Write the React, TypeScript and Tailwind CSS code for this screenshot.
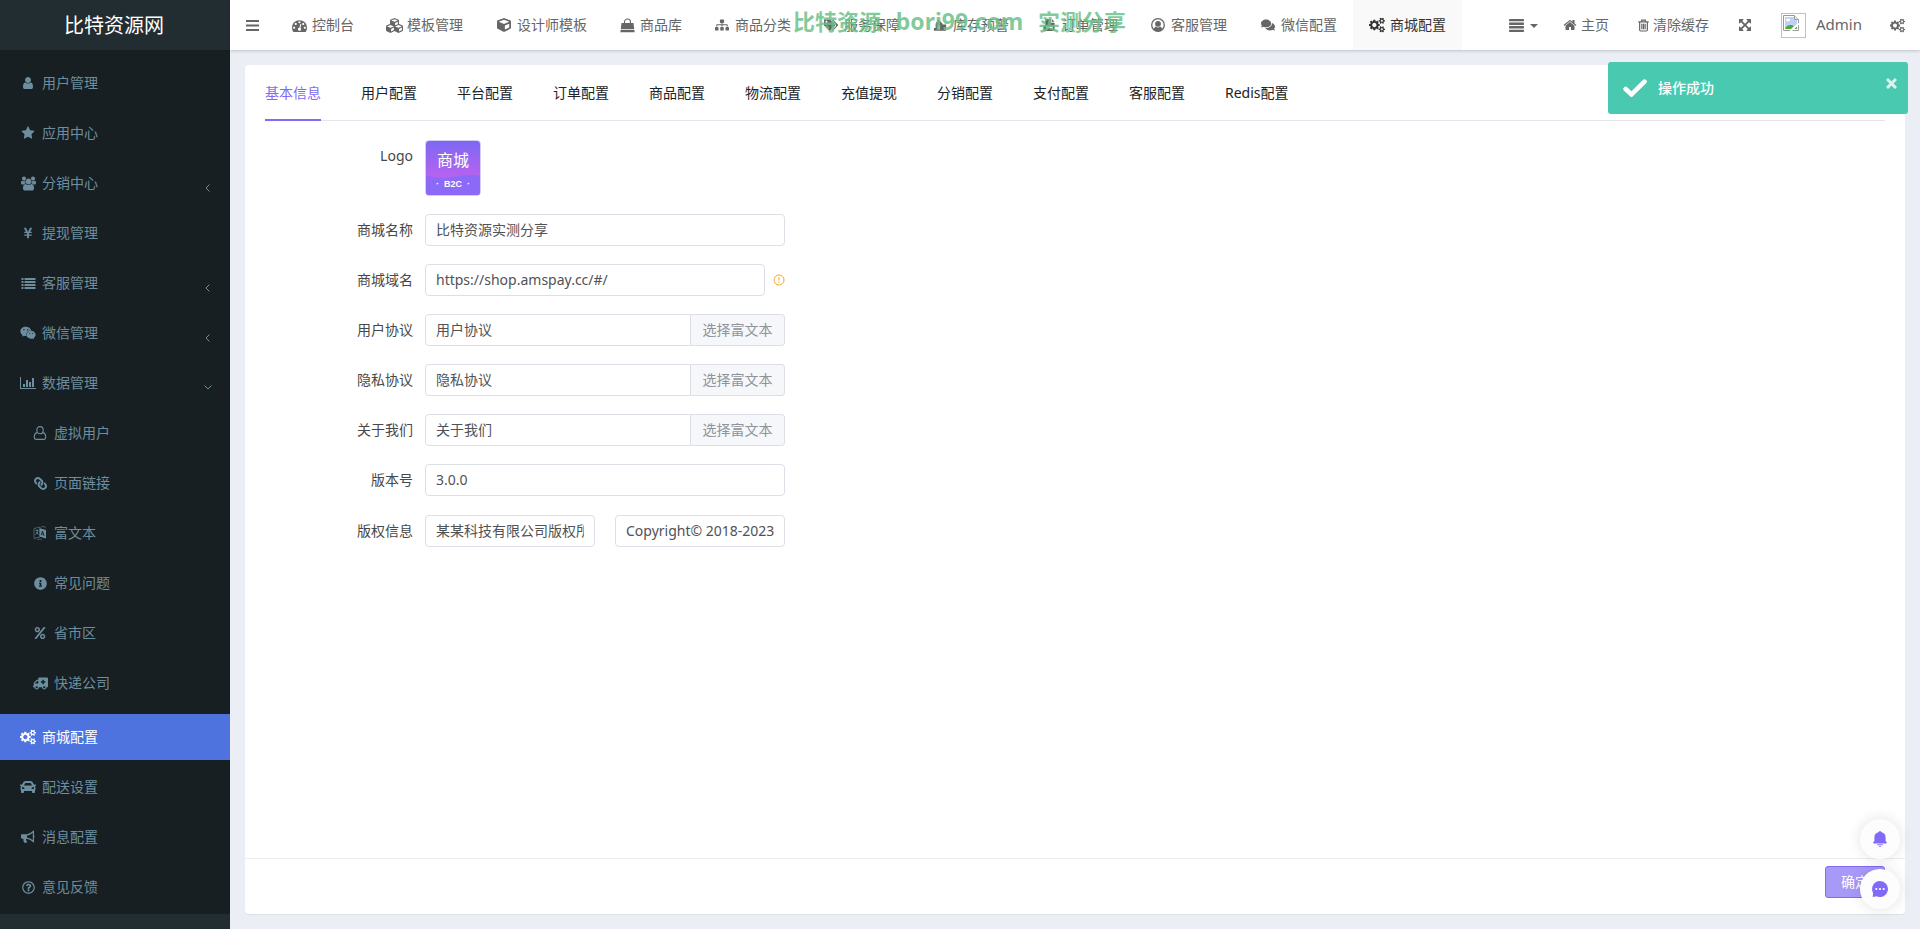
import React from 'react';
import {
  FaAmbulance,
  FaCar,
  FaComments,
  FaCube,
  FaCubes,
  FaInfoCircle,
  FaLink,
  FaPercent,
  FaRegQuestionCircle,
  FaSitemap,
  FaTags,
  FaWeixin,
  FaYenSign,
} from 'react-icons/fa';
import { clsx } from 'clsx';

interface IconProps {
  className?: string;
}

type IconType = React.ComponentType<IconProps>;

const glyph = (d: string, viewBox = '0 0 1792 1792'): IconType =>
  function Glyph({ className }) {
    return (
      <svg className={className} viewBox={viewBox} fill="currentColor">
        <path d={d} />
      </svg>
    );
  };

const IconUser = glyph(
  'M1536 1399q0 109-62.5 187t-150.5 78h-854q-88 0-150.5-78t-62.5-187q0-85 8.5-160.5t31.5-152 58.5-131 94-89 134.5-34.5q131 128 313 128t313-128q76 0 134.5 34.5t94 89 58.5 131 31.5 152 8.5 160.5zm-256-887q0 159-112.5 271.5t-271.5 112.5-271.5-112.5-112.5-271.5 112.5-271.5 271.5-112.5 271.5 112.5 112.5 271.5z'
);
const IconUsers = glyph(
  'M593 896q-162 5-265 128h-134q-82 0-138-40.5t-56-118.5q0-353 124-353 6 0 43.5 21t97.5 42.5 119 21.5q67 0 133-23-5 37-5 66 0 139 81 256zm1071 637q0 120-73 189.5t-194 69.5h-874q-121 0-194-69.5t-73-189.5q0-53 3.5-103.5t14-109 26.5-108.5 43-97.5 62-81 85.5-53.5 111.5-20q10 0 43 21.5t73 48 107 48 135 21.5 135-21.5 107-48 73-48 43-21.5q61 0 111.5 20t85.5 53.5 62 81 43 97.5 26.5 108.5 14 109 3.5 103.5zm-1024-1277q0 106-75 181t-181 75-181-75-75-181 75-181 181-75 181 75 75 181zm704 384q0 159-112.5 271.5t-271.5 112.5-271.5-112.5-112.5-271.5 112.5-271.5 271.5-112.5 271.5 112.5 112.5 271.5zm576 225q0 78-56 118.5t-138 40.5h-134q-103-123-265-128 81-117 81-256 0-29-5-66 66 23 133 23 59 0 119-21.5t97.5-42.5 43.5-21q124 0 124 353zm-128-609q0 106-75 181t-181 75-181-75-75-181 75-181 181-75 181 75 75 181z',
  '0 0 1920 1792'
);
const IconStar = glyph(
  'M1728 647q0 22-26 48l-363 354 86 500q1 7 1 20 0 21-10.5 35.5t-30.5 14.5q-19 0-40-12l-449-236-449 236q-22 12-40 12-21 0-31.5-14.5t-10.5-35.5q0-6 2-20l86-500-364-354q-25-27-25-48 0-37 56-46l502-73 225-455q19-41 49-41t49 41l225 455 502 73q56 9 56 46z'
);
const IconHome = glyph(
  'M1472 992v480q0 26-19 45t-45 19h-384v-384h-256v384h-384q-26 0-45-19t-19-45v-480q0-1 .5-3t.5-3l575-474 575 474q1 2 1 6zm223-69l-62 74q-8 9-21 11h-3q-13 0-21-7l-692-577-692 577q-12 8-24 7-13-2-21-11l-62-74q-8-10-7-23.5t11-21.5l719-599q32-26 76-26t76 26l244 204v-195q0-14 9-23t23-9h192q14 0 23 9t9 23v408l219 182q10 8 11 21.5t-7 23.5z'
);
const IconDashboard = glyph(
  'M384 1152q0-53-37.5-90.5t-90.5-37.5-90.5 37.5-37.5 90.5 37.5 90.5 90.5 37.5 90.5-37.5 37.5-90.5zm192-448q0-53-37.5-90.5t-90.5-37.5-90.5 37.5-37.5 90.5 37.5 90.5 90.5 37.5 90.5-37.5 37.5-90.5zm428 481l101-382q6-26-7.5-48.5t-38.5-29.5-48 6.5-30 39.5l-101 382q-60 5-107 43.5t-63 98.5q-20 77 20 146t117 89 146-20 89-117q16-60-6-117t-72-91zm660-33q0-53-37.5-90.5t-90.5-37.5-90.5 37.5-37.5 90.5 37.5 90.5 90.5 37.5 90.5-37.5 37.5-90.5zm-640-640q0-53-37.5-90.5t-90.5-37.5-90.5 37.5-37.5 90.5 37.5 90.5 90.5 37.5 90.5-37.5 37.5-90.5zm448 192q0-53-37.5-90.5t-90.5-37.5-90.5 37.5-37.5 90.5 37.5 90.5 90.5 37.5 90.5-37.5 37.5-90.5zm320 448q0 261-141 483-19 29-54 29h-1402q-35 0-54-29-141-221-141-483 0-182 71-348t191-286 286-191 348-71 348 71 286 191 191 286 71 348z'
);
const IconCogs = glyph(
  'M896 896q0-106-75-181t-181-75-181 75-75 181 75 181 181 75 181-75 75-181zm768 512q0-52-38-90t-90-38-90 38-38 90q0 53 37.5 90.5t90.5 37.5 90.5-37.5 37.5-90.5zm0-1024q0-52-38-90t-90-38-90 38-38 90q0 53 37.5 90.5t90.5 37.5 90.5-37.5 37.5-90.5zm-384 421v185q0 10-7 19.5t-16 10.5l-155 24q-11 35-32 76 34 48 90 115 7 11 7 20 0 12-7 19-23 30-82.5 89.5t-78.5 59.5q-11 0-21-7l-115-90q-37 19-77 31-11 108-23 155-7 24-30 24h-186q-11 0-20-7.5t-10-17.5l-23-153q-34-10-75-31l-118 89q-7 7-20 7-11 0-21-8-144-133-144-160 0-9 7-19 10-14 41-53t47-61q-23-44-35-82l-152-24q-10-1-17-9.5t-7-19.5v-185q0-10 7-19.5t16-10.5l155-24q11-35 32-76-34-48-90-115-7-11-7-20 0-12 7-20 22-30 82-89t79-59q11 0 21 7l115 90q34-18 77-32 11-108 23-154 7-24 30-24h186q11 0 20 7.5t10 17.5l23 153q34 10 75 31l118-89q8-7 20-7 11 0 21 8 144 133 144 160 0 8-7 19-12 16-42 54t-45 60q23 48 34 82l152 23q10 2 17 10.5t7 19.5zm640 533v140q0 16-149 31-12 27-30 52 51 113 51 138 0 4-4 7-122 71-124 71-8 0-46-47t-52-68q-20 2-30 2t-30-2q-14 21-52 68t-46 47q-2 0-124-71-4-3-4-7 0-25 51-138-18-25-30-52-149-15-149-31v-140q0-16 149-31 13-29 30-52-51-113-51-138 0-4 4-7 4-2 35-20t59-34 30-16q8 0 46 46.5t52 67.5q20-2 30-2t30 2q51-71 92-112l6-2q4 0 124 70 4 3 4 7 0 25-51 138 17 23 30 52 149 15 149 31zm0-1024v140q0 16-149 31-12 27-30 52 51 113 51 138 0 4-4 7-122 71-124 71-8 0-46-47t-52-68q-20 2-30 2t-30-2q-14 21-52 68t-46 47q-2 0-124-71-4-3-4-7 0-25 51-138-18-25-30-52-149-15-149-31v-140q0-16 149-31 13-29 30-52-51-113-51-138 0-4 4-7 4-2 35-20t59-34 30-16q8 0 46 46.5t52 67.5q20-2 30-2t30 2q51-71 92-112l6-2q4 0 124 70 4 3 4 7 0 25-51 138 17 23 30 52 149 15 149 31z',
  '0 0 1920 1792'
);
const IconExpand = glyph(
  'M1411 541l-355 355 355 355 144-144q29-31 70-14 39 17 39 59v448q0 26-19 45t-45 19h-448q-42 0-59-40-17-39 14-69l144-144-355-355-355 355 144 144q31 30 14 69-17 40-59 40h-448q-26 0-45-19t-19-45v-448q0-42 40-59 39-17 69 14l144 144 355-355-355-355-144 144q-19 19-45 19-12 0-24-5-40-17-40-59v-448q0-26 19-45t45-19h448q42 0 59 40 17 39-14 69l-144 144 355 355 355-355-144-144q-31-30-14-69 17-40 59-40h448q26 0 45 19t19 45v448q0 42-39 59-13 5-25 5-26 0-45-19z'
);
const IconList = glyph('M0 2h2v2H0zM3 2h11v2H3zM0 5h2v2H0zM3 5h11v2H3zM0 8h2v2H0zM3 8h11v2H3zM0 11h2v2H0zM3 11h11v2H3z', '0 0 14 15');
const IconChart = glyph('M0 1h1v11h15v1H0zM3 8h2v3H3zM6 4h2v7H6zM9 6h2v5H9zM12 2h2v9h-2z', '0 0 16 14');
const IconBars = glyph('M0 1h13v2H0zM0 5.5h13v2H0zM0 10h13v2H0z', '0 0 13 13');
const IconJustify = glyph('M0 0h15v2.4H0zM0 3.6h15V6H0zM0 7.2h15v2.4H0zM0 10.8h15v2.4H0z', '0 0 15 13.2');
const IconCaret = glyph('M0 0h8L4 4z', '0 0 8 4');
const IconStock = glyph('M6 1l5 5v1h4v7H1v-3h2V6zM6 8v4h2V8z', '0 0 16 15');
const IconOrder = glyph('M3 1h6v4h4v9H1V8h2zM10 1l3 3h-3zM4 9v2h7V9z', '0 0 14 15');
const IconBell = glyph(
  'M8 0c.6 0 1 .4 1.100.9C11.800 1.400 13.600 3.500 13.600 6v4l1.100 1.200c.3.400.1 1.200-.6 1.200H1.900c-.7 0-.9-.8-.6-1.200L2.400 10V6c0-2.500 1.800-4.600 4.500-5.100C7 .4 7.400 0 8 0zM5.300 13.300h5.400v.9H5.300zM6.300 14.900h3.400L8 16z',
  '0 0 16 16'
);

const IconChat: IconType = ({ className }) => (
  <svg className={className} viewBox="0 0 16 16">
    <path d="M8 0a8 8 0 1 1-3.300 15.300L.7 16l.4-4A8 8 0 0 1 8 0z" fill="currentColor" />
    <circle cx="4.300" cy="8" r="1.100" fill="#fff" />
    <circle cx="8" cy="8" r="1.100" fill="#fff" />
    <circle cx="11.700" cy="8" r="1.100" fill="#fff" />
  </svg>
);

const IconBag: IconType = ({ className }) => (
  <svg className={className} viewBox="0 0 15 14">
    <path d="M4.500 6V3.500a3 3 0 0 1 6 0V6" fill="none" stroke="currentColor" strokeWidth="1.100" />
    <path d="M1.500 4.500h12l.7 6H.8zM.7 11.300h13.600l.4 2.400H.3z" fill="currentColor" />
  </svg>
);

const IconBullhorn: IconType = ({ className }) => (
  <svg className={className} viewBox="0 0 14 13">
    <path d="M1.200 3.800H6v4.400h-.8c-.3 1.300.1 2.200 1.100 3.200-.6 1-2.400 1.200-3.100.6C2.800 10.800 2 9.700 2.500 8.200H1.200C.5 8.200 0 7.700 0 7V5c0-.7.5-1.200 1.200-1.200z" fill="currentColor" />
    <path d="M5.800 4.300C8.500 4.200 10.500 2.800 12.400 1v10C10.500 9.300 8.500 7.900 5.800 7.700" fill="none" stroke="currentColor" strokeWidth="1.200" />
    <path d="M12.500 4.800c1.500 0 1.500 2.400 0 2.400z" fill="currentColor" />
  </svg>
);

const IconUserOutline: IconType = ({ className }) => (
  <svg className={className} viewBox="0 0 14 14" fill="none" stroke="currentColor" strokeWidth={1.1}>
    <ellipse cx="7" cy="4.2" rx="3.2" ry="3.6" />
    <path d="M4.2 6.6C2 7 1.3 9 1.3 11c0 1.500.8 2.400 2 2.400h7.400c1.200 0 2-.9 2-2.400 0-2-.7-4-2.900-4.400" />
  </svg>
);

const IconUserCircle: IconType = ({ className }) => (
  <svg className={className} viewBox="0 0 14 14" fill="currentColor">
    <path d="M2.800 11.800c.3-2.500 1.400-3.200 2.200-3.300a3 3 0 0 0 4 0c.8.1 1.900.8 2.200 3.300a6 6 0 0 1-8.400 0z" />
    <circle cx="7" cy="5.800" r="2.900" />
    <circle cx="7" cy="7" r="6.300" fill="none" stroke="currentColor" strokeWidth="1.300" />
  </svg>
);

const IconLanguage: IconType = ({ className }) => (
  <svg className={className} viewBox="0 0 14 14">
    <path d="M1 2.500l6-1.500v10l-6 1.500z" fill="none" stroke="currentColor" strokeWidth=".8" opacity=".7" />
    <path d="M2.400 4.500h3M4 3.500v1M5 4.700C4.700 6.500 3.500 8 2.300 8.700M3 6l2.500 2.500" fill="none" stroke="currentColor" strokeWidth=".8" />
    <path d="M6.500 2.200L13 4v8.500L6.500 10.500z" fill="currentColor" />
    <path d="M8.200 9.200L9.500 5l1.600 5M8.700 7.800l2 .5" fill="none" stroke="#181f23" strokeWidth=".9" />
    <path d="M4 13.300h5M8 .7h4v1.500" fill="none" stroke="currentColor" strokeWidth=".7" opacity=".7" />
  </svg>
);

const IconTrash: IconType = ({ className }) => (
  <svg className={className} viewBox="0 0 12 14" fill="none" stroke="currentColor" strokeWidth={1.3}>
    <path d="M.3 3h11.400M4 3V1.200h4V3M1.800 3v8.700c0 .8.4 1.300 1 1.300h6.400c.6 0 1-.5 1-1.300V3M4.200 5v6M6 5v6M7.800 5v6" />
  </svg>
);

const IconCheck: IconType = ({ className }) => (
  <svg className={className} viewBox="0 0 24 18" fill="none" stroke="currentColor" strokeWidth={4.6} strokeLinecap="round">
    <path d="M2.600 10l5.900 5.400L21.500 2.600" />
  </svg>
);

const FlippedAmbulance: IconType = ({ className }) => <FaAmbulance className={clsx(className, '-scale-x-100')} />;

interface MenuItem {
  label: string;
  icon: IconType;
  size?: string;
  arrow?: 'left' | 'down';
  active?: boolean;
  children?: MenuItem[];
}

const MENU: MenuItem[] = [
  { label: '用户管理', icon: IconUser },
  { label: '应用中心', icon: IconStar },
  { label: '分销中心', icon: IconUsers, size: 'size-[15px]', arrow: 'left' },
  { label: '提现管理', icon: FaYenSign, size: 'size-3' },
  { label: '客服管理', icon: IconList, size: 'size-[15px]', arrow: 'left' },
  { label: '微信管理', icon: FaWeixin, size: 'size-4', arrow: 'left' },
  {
    label: '数据管理',
    icon: IconChart,
    size: 'size-4',
    arrow: 'down',
    children: [
      { label: '虚拟用户', icon: IconUserOutline },
      { label: '页面链接', icon: FaLink, size: 'size-[13px] -scale-x-100' },
      { label: '富文本', icon: IconLanguage },
      { label: '常见问题', icon: FaInfoCircle, size: 'size-[13px]' },
      { label: '省市区', icon: FaPercent, size: 'size-3' },
      { label: '快递公司', icon: FlippedAmbulance, size: 'size-[15px]' },
    ],
  },
  { label: '商城配置', icon: IconCogs, size: 'size-4', active: true },
  { label: '配送设置', icon: FaCar, size: 'size-4' },
  { label: '消息配置', icon: IconBullhorn, size: 'size-3.5' },
  { label: '意见反馈', icon: FaRegQuestionCircle, size: 'size-[13px]' },
];

const NAV: (MenuItem & { extra?: string })[] = [
  { label: '控制台', icon: IconDashboard, size: 'size-[15px]' },
  { label: '模板管理', icon: FaCubes, size: 'size-[17px]', extra: 'mr-px' },
  { label: '设计师模板', icon: FaCube },
  { label: '商品库', icon: IconBag, size: 'size-[15px]' },
  { label: '商品分类', icon: FaSitemap },
  { label: '服务保障', icon: FaTags },
  { label: '库存预警', icon: IconStock },
  { label: '订单管理', icon: IconOrder },
  { label: '客服管理', icon: IconUserCircle, extra: 'mr-px' },
  { label: '微信配置', icon: FaComments },
  { label: '商城配置', icon: IconCogs, size: 'size-4', active: true },
];

const TABS = [
  '基本信息',
  '用户配置',
  '平台配置',
  '订单配置',
  '商品配置',
  '物流配置',
  '充值提现',
  '分销配置',
  '支付配置',
  '客服配置',
  'Redis配置',
];

const SidebarItem: React.FC<{ item: MenuItem; nested?: boolean }> = ({ item, nested }) => {
  const Icon = item.icon;
  return (
    <li>
      <a
        className={clsx(
          'flex h-[46px] items-center',
          nested ? 'pl-8' : 'pl-5',
          item.active ? 'bg-[#4e73df] text-white' : 'text-[#6d8e9e]'
        )}
      >
        <span className="flex w-4 shrink-0 justify-center">
          <Icon className={clsx('shrink-0', item.size ?? 'size-3.5')} />
        </span>
        <span className="ml-1.5">{item.label}</span>
        {item.arrow && (
          <svg
            className={clsx('mr-[18px] ml-auto size-2', item.arrow === 'down' ? 'mt-2' : 'mt-[9px]')}
            viewBox="0 0 8 8"
            fill="none"
            stroke="currentColor"
          >
            <path d={item.arrow === 'down' ? 'M.5 2.500L4 6l3.500-3.500' : 'M5.500.5L2 4l3.500 3.500'} />
          </svg>
        )}
      </a>
      {item.children && (
        <ul className="flex flex-col gap-1 pt-1 pb-1">
          {item.children.map((child) => (
            <SidebarItem key={child.label} item={child} nested />
          ))}
        </ul>
      )}
    </li>
  );
};

const Sidebar = () => (
  <aside className="flex w-[230px] shrink-0 flex-col bg-[#222d32]">
    <h1 className="flex h-[50px] items-center justify-center pt-0.5 text-xl text-white">
      <span className="-ml-0.5">比特资源网</span>
    </h1>
    <ul className="flex h-[864px] flex-col gap-1 bg-[#181f23] pt-2.5">
      {MENU.map((item) => (
        <SidebarItem key={item.label} item={item} />
      ))}
    </ul>
  </aside>
);

// Placeholder shown while the avatar has no picture
const BrokenAvatar = () => (
  <div className="size-[25px] border border-[#c0c0c0] p-px">
    <svg className="size-4" viewBox="0 0 16 16">
      <path d="M.5.5h11l4 4v11H.5z" fill="#fff" stroke="#9a9a9a" />
      <path d="M2 2h9v3h3v5L9 14H2z" fill="#bcd3f7" />
      <ellipse cx="5" cy="5" rx="2.200" ry="1.300" fill="#fff" />
      <path d="M2 14c1-3 3-4 5-4s3 .5 4 1l-3 3z" fill="#4ea83a" />
      <path d="M11 14l3-3v3z" fill="#4ea83a" />
      <path d="M7.500 16L16 8.500" stroke="#fff" strokeWidth="2" />
      <path d="M11.500.5v4h4" fill="#eee" stroke="#9a9a9a" />
    </svg>
  </div>
);

const Header = () => (
  <header className="relative z-10 flex h-[50px] bg-white text-[#666] shadow-[0_1px_3px_rgba(0,21,41,0.2)]">
    <div className="flex w-[45px] items-center pl-4">
      <IconBars className="size-[13px]" />
    </div>
    <nav className="flex">
      {NAV.map(({ label, icon: Icon, size, active, extra }) => (
        <a
          key={label}
          className={clsx('flex h-full items-center gap-[5px] px-4', active && 'bg-[#f9f9f9] text-[#333]', extra)}
        >
          <span className="flex w-4 shrink-0 justify-center">
            <Icon className={clsx('shrink-0', size ?? 'size-3.5')} />
          </span>
          {label}
        </a>
      ))}
    </nav>
    <div className="ml-auto flex items-center pr-[15px]">
      <div className="mr-[25px] flex items-center gap-1.5">
        <IconJustify className="h-[13px] w-[15px]" />
        <IconCaret className="mt-0.5 h-1 w-2" />
      </div>
      <div className="mr-[29px] flex items-center gap-1">
        <IconHome className="size-3.5" />
        主页
      </div>
      <div className="mr-[29px] flex items-center gap-1">
        <IconTrash className="h-[13px] w-[11px]" />
        清除缓存
      </div>
      <IconExpand className="mr-[29px] size-3.5" />
      <BrokenAvatar />
      <span className="ml-2.5 w-[74px] text-[15px]">Admin</span>
      <IconCogs className="size-[15px]" />
    </div>
    <div className="absolute top-[5px] left-[563px] flex w-[333px] items-center justify-between text-[22px] leading-8 font-bold whitespace-nowrap text-[#6cc189]/85">
      <span>比特资源</span>
      <span className="text-[23px]">bori99.com</span>
      <span>实测分享</span>
    </div>
  </header>
);

const Field: React.FC<{ label: string; className?: string; children: React.ReactNode }> = ({
  label,
  className,
  children,
}) => (
  <div className={clsx('flex w-[520px]', className)}>
    <label className="mr-3 w-[148px] shrink-0 text-right leading-8 text-[#484848]">{label}</label>
    <div className="flex min-w-0 flex-1">{children}</div>
  </div>
);

const Input: React.FC<{ value: string; className?: string }> = ({ value, className }) => (
  <input
    readOnly
    value={value}
    className={clsx(
      'h-8 w-0 min-w-0 flex-1 border border-[#dcdfe6] bg-white px-2.5 pb-0.5 text-[#505256] outline-none',
      className ?? 'rounded'
    )}
  />
);

const RichTextInput: React.FC<{ value: string }> = ({ value }) => (
  <>
    <Input value={value} className="rounded-l" />
    <button className="h-8 w-[94px] rounded-r border border-l-0 border-[#dcdfe6] bg-[#f5f7fa] text-[#909399]">
      选择富文本
    </button>
  </>
);

const ShopLogo = () => (
  <div className="relative flex size-14 flex-col items-center overflow-hidden rounded border border-[#d3cdf3] bg-linear-to-b from-[#7b68f3] to-[#b562ef] to-65% text-white">
    <svg className="absolute bottom-0 left-0 h-5 w-full" viewBox="0 0 53 20" preserveAspectRatio="none">
      <path d="M0 1c14 3 22 2 32 0s15-1 21 0v19H0z" fill="#8d69f7" />
    </svg>
    <span className="relative mt-2 text-base leading-[22px]">商城</span>
    <span className="relative mt-[7px] font-['Liberation_Sans',sans-serif] text-[9px] leading-3 font-bold whitespace-pre">
      ·  B2C  ·
    </span>
  </div>
);

const Toast = () => (
  <div className="absolute top-[62px] right-3 z-20 flex h-[52px] w-[300px] items-center rounded-[3px] bg-[#48c9b0] pl-[15px] text-white">
    <IconCheck className="h-[18px] w-6" />
    <span className="ml-[11px] font-medium">操作成功</span>
    <svg
      className="mr-[11px] mb-2.5 ml-auto size-[11px] opacity-80"
      viewBox="0 0 11 11"
      stroke="currentColor"
      strokeWidth={3}
    >
      <path d="M1 1l9 9M10 1l-9 9" />
    </svg>
  </div>
);

const FloatingActions = () => (
  <div className="absolute top-[819px] right-5 flex flex-col gap-2.5 text-[#826af9]">
    {[IconBell, IconChat].map((Icon, index) => (
      <button
        key={index}
        className="flex size-10 items-center justify-center rounded-full bg-[#fdfdfd] shadow-[0_0_14px_rgba(0,0,0,0.12)]"
      >
        <Icon className="size-4" />
      </button>
    ))}
  </div>
);

const App = () => (
  <div className="relative flex h-[929px] w-[1920px] overflow-hidden bg-[#ebeef4] font-['Noto_Sans','Noto_Sans_CJK_SC',sans-serif] text-sm">
    <Sidebar />
    <div className="flex flex-1 flex-col">
      <Header />
      <main className="mx-[15px] mt-[15px] flex h-[849px] flex-col rounded bg-white shadow-[0_1px_1px_rgba(0,0,0,0.06)]">
        <div className="mx-5 flex h-14 shrink-0 gap-10 border-b border-[#e4e4ec] text-[#222]">
          {TABS.map((tab, index) => (
            <div
              key={tab}
              className={clsx('-mb-px h-14 leading-[56px]', index === 0 && 'border-b-2 border-[#826af9] text-[#826af9]')}
            >
              {tab}
            </div>
          ))}
        </div>

        <div className="mt-[19px] ml-5 flex flex-1 flex-col gap-[18px]">
          <Field label="Logo">
            <ShopLogo />
          </Field>
          <Field label="商城名称">
            <Input value="比特资源实测分享" />
          </Field>
          <Field label="商城域名">
            <Input value="https://shop.amspay.cc/#/" />
            <div className="flex w-5 items-center justify-end">
              <svg className="size-3" viewBox="0 0 12 12" fill="none" stroke="#f7a91e">
                <circle cx="6" cy="6" r="5" />
                <path d="M6 3v3.500M6 7.700v1.300" />
              </svg>
            </div>
          </Field>
          <Field label="用户协议">
            <RichTextInput value="用户协议" />
          </Field>
          <Field label="隐私协议">
            <RichTextInput value="隐私协议" />
          </Field>
          <Field label="关于我们">
            <RichTextInput value="关于我们" />
          </Field>
          <Field label="版本号">
            <Input value="3.0.0" />
          </Field>
          <Field label="版权信息" className="pt-px">
            <div className="flex w-full gap-5">
              <Input value="某某科技有限公司版权所有" />
              <Input value="Copyright© 2018-2023" />
            </div>
          </Field>
        </div>

        <footer className="flex h-14 shrink-0 justify-end border-t border-[#ececec] pt-[7px] pr-5">
          <button className="h-8 w-[60px] rounded-[3px] border border-[#826af9] bg-[#a799f8] text-white">确定</button>
        </footer>
      </main>
    </div>
    <Toast />
    <FloatingActions />
  </div>
);

export default App;
